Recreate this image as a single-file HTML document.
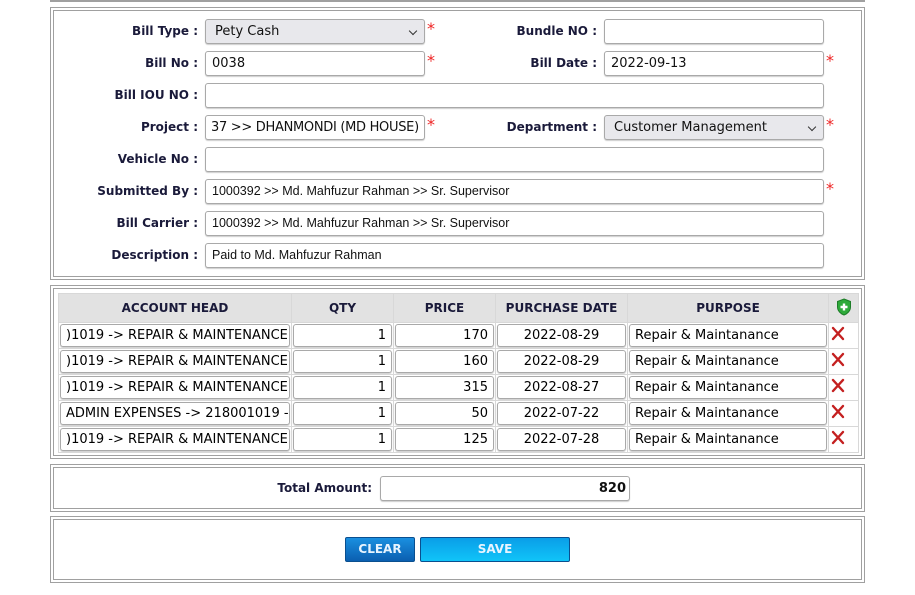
<!DOCTYPE html>
<html><head><meta charset="utf-8"><style>
*{box-sizing:border-box;margin:0;padding:0}
body{width:915px;height:595px;background:#fff;position:relative;overflow:hidden;font-family:"DejaVu Sans","Liberation Sans",sans-serif}
.box{position:absolute;border:1px solid #a0a0a0}
.box::after{content:"";position:absolute;left:2px;top:2px;right:2px;bottom:2px;border:1px solid #a0a0a0}
.lbl{position:absolute;font-weight:bold;font-size:12px;color:#1a1a3a;text-align:right;line-height:24px}
.in{position:absolute;height:25px;border:1px solid #a9a9a9;border-radius:3px;background:#fff;font-size:13px;line-height:23px;padding-left:6px;color:#111;white-space:nowrap;overflow:hidden;box-shadow:0 1px 1px #ccc}
.sm{font-family:"Liberation Sans","DejaVu Sans",sans-serif;font-size:12.5px}
.sel{background:#e8e8ec;padding-left:9px}
.sel::after{content:"";position:absolute;right:8px;top:8px;width:5px;height:5px;border-right:1.5px solid #333;border-bottom:1.5px solid #333;transform:rotate(45deg)}
.star{position:absolute;color:#e22;font-size:16px;line-height:16px}
table{position:absolute;left:58px;top:293px;border-collapse:collapse;table-layout:fixed;width:800px}
td,th{border:1px solid #d8d8d8;padding:0;overflow:hidden}
th{background:#e2e2e2;height:29px;font-size:12px;color:#1a1a3a;font-weight:bold}
td{height:26px;position:relative}
td .c{height:23px;margin:1px 1px;border:1px solid #a9a9a9;border-radius:3px;font-size:13px;line-height:21px;padding:0 5px;white-space:nowrap;overflow:hidden;box-shadow:0 1px 1px #ccc}
.r{text-align:right}.ce{text-align:center}
.btn{position:absolute;height:25px;border:1px solid #0a4f8f;border-radius:2px;color:#e8f4ff;font-weight:bold;font-size:12px;text-align:center;line-height:23px}
</style></head><body>
<div style="position:absolute;left:50px;top:0;width:815px;height:2px;background:#a0a0a0"></div>

<div class="box" style="left:50px;top:7px;width:815px;height:273px"></div>
<div class="lbl" style="left:60px;top:19px;width:138px">Bill Type :</div>
<div class="in sel" style="left:205px;top:19px;width:220px;height:25px">Pety Cash</div><div class="star" style="left:427px;top:21px">*</div>
<div class="lbl" style="left:460px;top:19px;width:137px">Bundle NO :</div>
<div class="in" style="left:604px;top:19px;width:220px"></div>

<div class="lbl" style="left:60px;top:51px;width:138px">Bill No :</div>
<div class="in" style="left:205px;top:51px;width:220px">0038</div><div class="star" style="left:427px;top:53px">*</div>
<div class="lbl" style="left:460px;top:51px;width:137px">Bill Date :</div>
<div class="in" style="left:604px;top:51px;width:220px">2022-09-13</div><div class="star" style="left:826px;top:53px">*</div>

<div class="lbl" style="left:60px;top:83px;width:138px">Bill IOU NO :</div>
<div class="in" style="left:205px;top:83px;width:619px"></div>

<div class="lbl" style="left:60px;top:115px;width:138px">Project :</div>
<div class="in" style="left:205px;top:115px;width:220px;padding-left:5px;letter-spacing:-0.3px">37 &gt;&gt; DHANMONDI (MD HOUSE)</div><div class="star" style="left:427px;top:117px">*</div>
<div class="lbl" style="left:460px;top:115px;width:137px">Department :</div>
<div class="in sel" style="left:604px;top:115px;width:220px">Customer Management</div><div class="star" style="left:826px;top:117px">*</div>

<div class="lbl" style="left:60px;top:147px;width:138px">Vehicle No :</div>
<div class="in" style="left:205px;top:147px;width:619px"></div>

<div class="lbl" style="left:60px;top:179px;width:138px">Submitted By :</div>
<div class="in sm" style="left:205px;top:179px;width:619px">1000392 &gt;&gt; Md. Mahfuzur Rahman &gt;&gt; Sr. Supervisor</div><div class="star" style="left:826px;top:181px">*</div>

<div class="lbl" style="left:60px;top:211px;width:138px">Bill Carrier :</div>
<div class="in sm" style="left:205px;top:211px;width:619px">1000392 &gt;&gt; Md. Mahfuzur Rahman &gt;&gt; Sr. Supervisor</div>

<div class="lbl" style="left:60px;top:243px;width:138px">Description :</div>
<div class="in sm" style="left:205px;top:243px;width:619px">Paid to Md. Mahfuzur Rahman</div>

<div class="box" style="left:50px;top:285px;width:815px;height:174px"></div>
<table>
<colgroup><col style="width:233px"><col style="width:102px"><col style="width:102px"><col style="width:132px"><col style="width:201px"><col style="width:30px"></colgroup>
<tr><th>ACCOUNT HEAD</th><th>QTY</th><th>PRICE</th><th>PURCHASE DATE</th><th>PURPOSE</th><th><svg width="16" height="18" viewBox="0 0 16 18"><path d="M8 1 L14.5 3.5 V9 C14.5 13 11 16 8 17 C5 16 1.5 13 1.5 9 V3.5 Z" fill="#2eaa3a" stroke="#1d7d28"/><path d="M8 5.5V12.5M4.5 9H11.5" stroke="#fff" stroke-width="2.4"/></svg></th></tr>
<tr><td><div class="c">)1019 -&gt; REPAIR &amp; MAINTENANCE</div></td><td><div class="c r">1</div></td><td><div class="c r">170</div></td><td><div class="c ce">2022-08-29</div></td><td><div class="c">Repair &amp; Maintanance</div></td><td></td></tr>
<tr><td><div class="c">)1019 -&gt; REPAIR &amp; MAINTENANCE</div></td><td><div class="c r">1</div></td><td><div class="c r">160</div></td><td><div class="c ce">2022-08-29</div></td><td><div class="c">Repair &amp; Maintanance</div></td><td></td></tr>
<tr><td><div class="c">)1019 -&gt; REPAIR &amp; MAINTENANCE</div></td><td><div class="c r">1</div></td><td><div class="c r">315</div></td><td><div class="c ce">2022-08-27</div></td><td><div class="c">Repair &amp; Maintanance</div></td><td></td></tr>
<tr><td><div class="c">ADMIN EXPENSES -&gt; 218001019 -</div></td><td><div class="c r">1</div></td><td><div class="c r">50</div></td><td><div class="c ce">2022-07-22</div></td><td><div class="c">Repair &amp; Maintanance</div></td><td></td></tr>
<tr><td><div class="c">)1019 -&gt; REPAIR &amp; MAINTENANCE</div></td><td><div class="c r">1</div></td><td><div class="c r">125</div></td><td><div class="c ce">2022-07-28</div></td><td><div class="c">Repair &amp; Maintanance</div></td><td></td></tr>
</table>
<svg style="position:absolute;left:0;top:0" width="915" height="595">
<g stroke="#c42020" stroke-width="2.4" stroke-linecap="round">
<path d="M833 328l10 11M843 328l-10 11"/><path d="M833 354l10 11M843 354l-10 11"/><path d="M833 380l10 11M843 380l-10 11"/><path d="M833 406l10 11M843 406l-10 11"/><path d="M833 432l10 11M843 432l-10 11"/>
</g></svg>

<div class="box" style="left:50px;top:464px;width:815px;height:48px"></div>
<div class="lbl" style="left:250px;top:476px;width:122px">Total Amount:</div>
<div class="in" style="left:380px;top:476px;width:250px;text-align:right;padding-right:3px;font-weight:bold">820</div>

<div class="box" style="left:50px;top:516px;width:815px;height:67px"></div>
<div class="btn" style="left:345px;top:537px;width:70px;background:linear-gradient(#1a8fe0,#0b5fb0)">CLEAR</div>
<div class="btn" style="left:420px;top:537px;width:150px;background:linear-gradient(#0a9ee8,#10c4f8)">SAVE</div>
</body></html>
